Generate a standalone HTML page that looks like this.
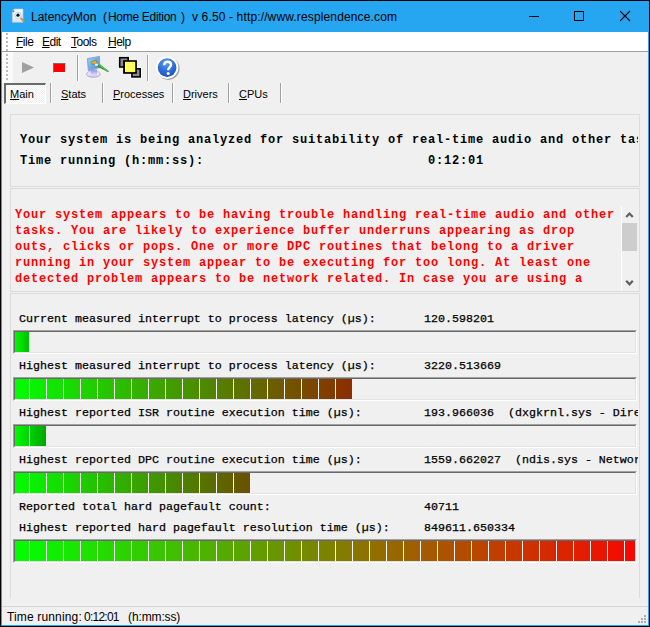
<!DOCTYPE html>
<html><head><meta charset="utf-8">
<style>
*{margin:0;padding:0;box-sizing:border-box}
html,body{width:650px;height:627px;overflow:hidden;background:#F0F0F0}
#w{position:relative;width:650px;height:627px;overflow:hidden;background:#F0F0F0;font-family:"Liberation Sans",sans-serif;color:#000}
.a{position:absolute;white-space:pre}
.s{font-family:"Liberation Sans",sans-serif;font-size:11px;line-height:13px}
.mb{font-family:"Liberation Mono",monospace;font-weight:bold;font-size:12px;letter-spacing:0.8px;line-height:16px}
.mr{font-family:"Liberation Mono",monospace;font-size:11.667px;line-height:14px;-webkit-text-stroke:0.25px #000}
.u{text-decoration:underline}
.pan{position:absolute;border:1px solid #DCDCDC}
.bar{position:absolute;left:13px;width:624px;height:24px;border:1px solid;border-color:#A0A0A0 #fff #fff #A0A0A0}
.in{position:absolute;left:0;top:0;right:0;bottom:0;border:1px solid;border-color:#696969 #E3E3E3 #E3E3E3 #696969;overflow:hidden}
.fill{position:absolute;left:-2px;top:0;height:20px;overflow:hidden}
.gaps{position:absolute;left:0;top:0;height:20px;width:640px;background:repeating-linear-gradient(90deg,transparent 0,transparent 16px,#F8F8F8 16px,#F8F8F8 17px)}
.vsep{position:absolute;width:2px;height:20px;top:83px;border-left:1px solid #A0A0A0;border-right:1px solid #fff}
</style></head><body>
<div id="w">
<!-- window frame -->
<div class="a" style="left:0;top:0;width:650px;height:627px;border:1px solid #000"></div>
<div class="a" style="left:1px;top:1px;width:648px;height:625px;border:1px solid #26A5F0;border-top:none"></div>
<!-- title bar -->
<div class="a" style="left:1px;top:1px;width:648px;height:31px;background:#26A5F0"></div>
<svg class="a" style="left:8px;top:6px" width="20" height="20" viewBox="0 0 20 20">
  <defs><linearGradient id="pg" x1="0" y1="0" x2="0" y2="1"><stop offset="0" stop-color="#FFFFFF"/><stop offset="1" stop-color="#DCE4F8"/></linearGradient></defs>
  <path d="M4.3 5L6.3 3H15V16.3H4.3Z" fill="url(#pg)" stroke="#B8C4E6" stroke-width="0.7"/>
  <circle cx="5.4" cy="5.2" r="1" fill="#3D6FD0"/>
  <circle cx="10" cy="9.3" r="3.2" fill="#EEF8FC" stroke="#B0DCEE" stroke-width="1"/>
  <circle cx="10" cy="9.2" r="1.6" fill="#111"/>
  <path d="M12.6 12L16.2 15.6" stroke="#E08A2E" stroke-width="1.8"/>
</svg>
<div class="a" style="left:31px;top:9px;font-size:12px;line-height:16px">LatencyMon</div>
<div class="a" style="left:103px;top:9px;font-size:12px;line-height:16px">(</div>
<div class="a" style="left:108px;top:9px;font-size:12px;line-height:16px;letter-spacing:-0.3px">Home Edition</div>
<div class="a" style="left:181px;top:9px;font-size:12px;line-height:16px">)</div>
<div class="a" style="left:192px;top:9px;font-size:12px;line-height:16px;letter-spacing:0.14px">v 6.50 - http://www.resplendence.com</div>
<!-- caption buttons -->
<div class="a" style="left:529px;top:16px;width:10px;height:1px;background:#000"></div>
<div class="a" style="left:574px;top:11px;width:10px;height:10px;border:1px solid #000"></div>
<svg class="a" style="left:619px;top:10px" width="12" height="12" viewBox="0 0 12 12"><path d="M1 1L11 11M11 1L1 11" stroke="#000" stroke-width="1.1"/></svg>
<!-- menu bar -->
<div class="a" style="left:2px;top:32px;width:646px;height:19px;background:#fff"></div>
<div class="a" style="left:2px;top:51px;width:646px;height:1px;background:#A0A0A0"></div>
<div class="a s" style="left:16px;top:36px;font-size:12px;letter-spacing:-0.5px"><span class="u">F</span>ile</div>
<div class="a s" style="left:42px;top:36px;font-size:12px;letter-spacing:-0.5px"><span class="u">E</span>dit</div>
<div class="a s" style="left:71px;top:36px;font-size:12px;letter-spacing:-0.5px"><span class="u">T</span>ools</div>
<div class="a s" style="left:108px;top:36px;font-size:12px;letter-spacing:-0.5px"><span class="u">H</span>elp</div>
<!-- toolbar -->
<div class="a" style="left:2px;top:52px;width:11px;height:31px;background:#FAFAFA"></div>
<div class="a" style="left:6px;top:33px;width:2px;height:18px;background:repeating-linear-gradient(180deg,#BBBBBB 0,#BBBBBB 2px,transparent 2px,transparent 4px)"></div>
<div class="a" style="left:6px;top:54px;width:2px;height:26px;background:repeating-linear-gradient(180deg,#BBBBBB 0,#BBBBBB 2px,transparent 2px,transparent 4px)"></div>
<svg class="a" style="left:20px;top:60px" width="16" height="16" viewBox="0 0 16 16"><path d="M2 2L14 7.5L2 13z" fill="#A0A0A0"/></svg>
<div class="a" style="left:53px;top:63px;width:13px;height:10px;background:#FF0000;border:1px solid;border-color:#6E7272 #F8F8F8 #F8F8F8 #6E7272"></div>
<div class="vsep" style="left:77px;top:55px;height:26px"></div>
<svg class="a" style="left:84px;top:54px" width="28" height="26" viewBox="0 0 28 26">
  <defs>
    <linearGradient id="scr" x1="0" y1="0" x2="1" y2="1"><stop offset="0" stop-color="#8AD8FC"/><stop offset="1" stop-color="#3A8EE0"/></linearGradient>
    <linearGradient id="std" x1="0" y1="0" x2="0" y2="1"><stop offset="0" stop-color="#9890E0"/><stop offset="1" stop-color="#D8D4F4"/></linearGradient>
    <linearGradient id="bse" x1="0" y1="0" x2="0" y2="1"><stop offset="0" stop-color="#FFFFFF"/><stop offset="1" stop-color="#C8C4EC"/></linearGradient>
  </defs>
  <ellipse cx="9.4" cy="20.2" rx="7" ry="3.1" fill="url(#bse)" stroke="#A8A4D8" stroke-width="0.8"/>
  <path d="M6.5 15.5h6.5l0.2 4.6c-1.8 0.9-4.8 0.9-6.7 0z" fill="url(#std)"/>
  <path d="M3.4 4.6L15.5 2.4L15.8 13.6L4.3 16.6z" fill="url(#scr)" stroke="#9A94CC" stroke-width="0.9"/>
  <path d="M7.6 7.8L12.2 5.8L13 8.8L8.4 10.8z" fill="#F0A830" stroke="#A86818" stroke-width="0.6"/>
  <path d="M11.2 10.2L14.4 11.4" stroke="#F4F8FF" stroke-width="2"/>
  <path d="M14 10.4L15.8 10.2L24.8 17L24.2 18.2L13.4 12.6Z" fill="#2A902A"/>
  <path d="M15 10.9L23.6 16.8" stroke="#6AD86A" stroke-width="1" stroke-linecap="round"/>
</svg>
<svg class="a" style="left:116px;top:54px" width="28" height="26" viewBox="0 0 28 26">
  <defs><pattern id="chk" width="2.6" height="2.6" patternUnits="userSpaceOnUse" x="9" y="7.8"><rect width="2.6" height="2.6" fill="#FFFF10"/><rect x="0" y="0" width="1.2" height="1.2" fill="#FFFFFF"/><rect x="1.3" y="1.3" width="1.3" height="1.3" fill="#FFFFFF" opacity="0.35"/></pattern></defs>
  <path d="M2.5 2.5h11v11.5h-11z M14.5 13.5h11v10.8h-11z" fill="#fff"/>
  <rect x="3.7" y="3.7" width="8.5" height="9.3" fill="#8C8C8C" stroke="#000" stroke-width="1.6"/>
  <rect x="15.9" y="14.8" width="8.3" height="8.1" fill="#8C8C8C" stroke="#000" stroke-width="1.6"/>
  <rect x="7.1" y="6.2" width="13.8" height="13.6" fill="#000"/>
  <rect x="9" y="7.8" width="10.2" height="10.3" fill="url(#chk)"/>
</svg>
<div class="vsep" style="left:147px;top:55px;height:26px"></div>
<svg class="a" style="left:152px;top:52px" width="32" height="30" viewBox="0 0 32 30">
  <defs><radialGradient id="hg" cx="0.45" cy="0.25" r="0.8"><stop offset="0" stop-color="#5C9AF0"/><stop offset="0.6" stop-color="#2E6AD6"/><stop offset="1" stop-color="#1F50B8"/></radialGradient></defs>
  <circle cx="16.2" cy="16.6" r="11.3" fill="#5A5A5A" opacity="0.55"/>
  <circle cx="15.1" cy="15.6" r="11.3" fill="#FFFFFF"/>
  <circle cx="15.1" cy="15.6" r="9.3" fill="url(#hg)"/>
  <path d="M12.2 13.2C12.2 10.9 13.7 9.7 15.6 9.7C17.6 9.7 19 10.9 19 12.7C19 15.1 16.3 15.4 16.3 17.6V18.3" fill="none" stroke="#fff" stroke-width="2.4"/>
  <circle cx="16.2" cy="21.4" r="1.5" fill="#fff"/>
</svg>
<!-- tabs -->
<div class="a" style="left:4px;top:83px;width:42px;height:21px;border-top:2px solid #6A6A6A;border-left:2px solid #6A6A6A;border-bottom:1px solid #fff;border-right:1px solid #fff;background:repeating-conic-gradient(#fff 0 25%,#F0F0F0 0 50%) 0 0/2px 2px"></div>
<div class="a s" style="left:10px;top:88px"><span class="u">M</span>ain</div>
<div class="vsep" style="left:50px"></div>
<div class="a s" style="left:61px;top:88px"><span class="u">S</span>tats</div>
<div class="vsep" style="left:102px"></div>
<div class="a s" style="left:113px;top:88px"><span class="u">P</span>rocesses</div>
<div class="vsep" style="left:172px"></div>
<div class="a s" style="left:183px;top:88px"><span class="u">D</span>rivers</div>
<div class="vsep" style="left:228px"></div>
<div class="a s" style="left:239px;top:88px"><span class="u">C</span>PUs</div>
<div class="vsep" style="left:280px"></div>

<!-- panel 1 -->
<div class="pan" style="left:10px;top:114px;width:630px;height:73px"></div>
<div class="a" style="left:11px;top:115px;width:627px;height:71px;overflow:hidden">
  <div class="a mb" style="left:9px;top:17px">Your system is being analyzed for suitability of real-time audio and other tasks.</div>
  <div class="a mb" style="left:9px;top:38px">Time running (h:mm:ss):</div>
  <div class="a mb" style="left:417px;top:38px">0:12:01</div>
</div>
<!-- panel 2 -->
<div class="pan" style="left:10px;top:188px;width:630px;height:104px"></div>
<div class="a" style="left:11px;top:189px;width:610px;height:102px;overflow:hidden;color:#FF0000">
  <div class="a mb" style="left:4px;top:18px">Your system appears to be having trouble handling real-time audio and other
tasks. You are likely to experience buffer underruns appearing as drop
outs, clicks or pops. One or more DPC routines that belong to a driver
running in your system appear to be executing for too long. At least one
detected problem appears to be network related. In case you are using a</div>
</div>
<!-- scrollbar -->
<div class="a" style="left:621px;top:206px;width:1px;height:85px;background:#fff"></div>
<div class="a" style="left:622px;top:223px;width:15px;height:28px;background:#CDCDCD"></div>
<svg class="a" style="left:622px;top:206px" width="17" height="17" viewBox="0 0 17 17"><path d="M4.2 11L7.5 7.5L10.8 11" fill="none" stroke="#606060" stroke-width="2.2"/></svg>
<svg class="a" style="left:622px;top:274px" width="17" height="17" viewBox="0 0 17 17"><path d="M4.2 6.8L7.5 10.3L10.8 6.8" fill="none" stroke="#606060" stroke-width="2.2"/></svg>

<!-- panel 3 -->
<div class="a" style="left:10px;top:293px;width:630px;height:305px;border:1px solid #DCDCDC;border-bottom:none"></div>
<div class="a" style="left:11px;top:294px;width:627px;height:304px;overflow:hidden">
  <div class="a mr" style="left:8px;top:18px">Current measured interrupt to process latency (µs):</div>
  <div class="a mr" style="left:413px;top:18px">120.598201</div>
  <div class="a mr" style="left:8px;top:65px">Highest measured interrupt to process latency (µs):</div>
  <div class="a mr" style="left:413px;top:65px">3220.513669</div>
  <div class="a mr" style="left:8px;top:112px">Highest reported ISR routine execution time (µs):</div>
  <div class="a mr" style="left:413px;top:112px">193.966036  (dxgkrnl.sys - DirectX Graphics Kernel)</div>
  <div class="a mr" style="left:8px;top:159px">Highest reported DPC routine execution time (µs):</div>
  <div class="a mr" style="left:413px;top:159px">1559.662027  (ndis.sys - Network Driver Interface Specification)</div>
  <div class="a mr" style="left:8px;top:206px">Reported total hard pagefault count:</div>
  <div class="a mr" style="left:413px;top:206px">40711</div>
  <div class="a mr" style="left:8px;top:227px">Highest reported hard pagefault resolution time (µs):</div>
  <div class="a mr" style="left:413px;top:227px">849611.650334</div>
</div>
<div class="bar" style="top:330px"><div class="in"><div class="fill" style="width:16px;background:linear-gradient(90deg,#00FF00,#00BE00)"><div class="gaps"></div></div></div></div>
<div class="bar" style="top:377px"><div class="in"><div class="fill" style="width:339px;background:linear-gradient(90deg,#00FF00,#8C2D00)"><div class="gaps"></div></div></div></div>
<div class="bar" style="top:424px"><div class="in"><div class="fill" style="width:33px;background:linear-gradient(90deg,#00FF00,#00A500)"><div class="gaps"></div></div></div></div>
<div class="bar" style="top:471px"><div class="in"><div class="fill" style="width:237px;background:linear-gradient(90deg,#00FF00,#6B5000)"><div class="gaps"></div></div></div></div>
<div class="bar" style="top:539px"><div class="in"><div class="fill" style="width:640px;background:linear-gradient(90deg,#00FF00,#FF0000)"><div class="gaps"></div></div></div></div>

<!-- status bar -->
<div class="a" style="left:2px;top:606px;width:646px;height:1px;background:#D7D7D7"></div>
<div class="a" style="left:7px;top:610px;font-size:12px;line-height:15px;letter-spacing:0.15px">Time running:</div>
<div class="a" style="left:84px;top:610px;font-size:12px;line-height:15px;letter-spacing:-0.75px">0:12:01</div>
<div class="a" style="left:128px;top:610px;font-size:12px;line-height:15px;letter-spacing:-0.12px">(h:mm:ss)</div>
<svg class="a" style="left:638px;top:615px" width="8" height="8" viewBox="0 0 8 8" fill="#ADADAD">
  <rect x="6" y="0" width="2" height="2"/><rect x="3" y="3" width="2" height="2"/><rect x="6" y="3" width="2" height="2"/>
  <rect x="0" y="6" width="2" height="2"/><rect x="3" y="6" width="2" height="2"/><rect x="6" y="6" width="2" height="2"/>
</svg>
</div>
</body></html>
